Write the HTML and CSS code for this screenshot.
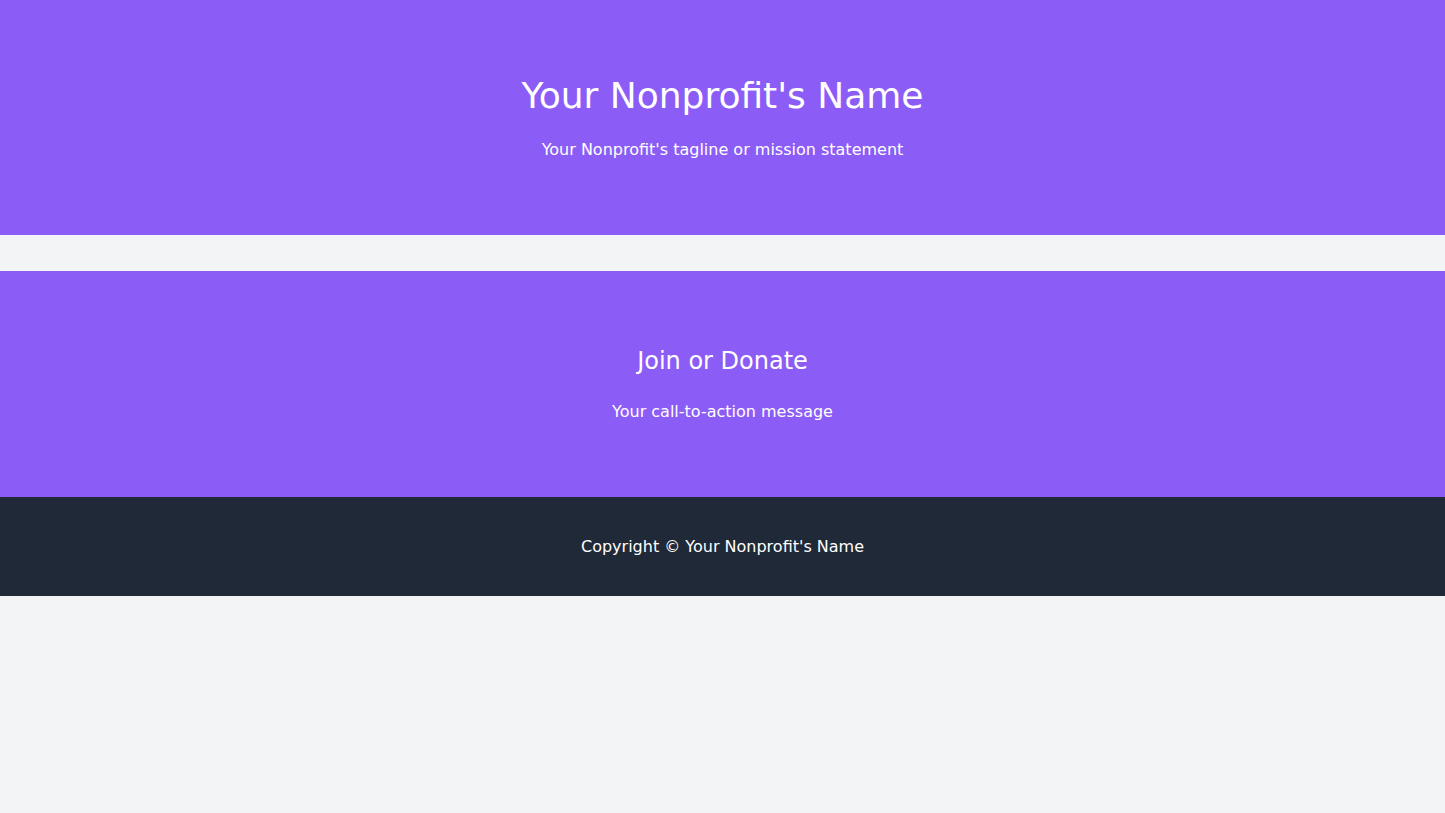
FILE: index.html
```html
<!DOCTYPE html>
<html lang="en">
<head>
<meta charset="utf-8">
<title>Your Nonprofit's Name</title>
<link rel="stylesheet" href="styles.css">
</head>
<body>
<header class="hero">
  <h1 class="hero-title">Your Nonprofit's Name</h1>
  <p class="hero-tagline">Your Nonprofit's tagline or mission statement</p>
</header>
<section class="cta">
  <h2 class="cta-title">Join or Donate</h2>
  <p class="cta-text">Your call-to-action message</p>
</section>
<footer class="footer">
  <p class="footer-text">Copyright © Your Nonprofit's Name</p>
</footer>
</body>
</html>
```
FILE: styles.css
```css
* { box-sizing: border-box; }
html, body { margin: 0; padding: 0; }
body {
  background: #f3f4f6;
  font-family: "DejaVu Sans", "Noto Sans", sans-serif;
  color: #fff;
  min-height: 813px;
}
.hero {
  background: #8b5cf6;
  height: 235px;
  padding-top: 76px;
  text-align: center;
}
.hero-title {
  margin: 0;
  font-size: 36px;
  line-height: 40px;
  font-weight: 400;
}
.hero-tagline {
  margin: 22px 0 0;
  font-size: 16px;
  line-height: 24px;
}
.cta {
  background: #8b5cf6;
  margin-top: 36px;
  height: 226px;
  padding-top: 74px;
  text-align: center;
}
.cta-title {
  margin: 0;
  font-size: 24px;
  line-height: 32px;
  font-weight: 400;
}
.cta-text {
  margin: 23px 0 0;
  font-size: 16px;
  line-height: 24px;
}
.footer {
  background: #1f2937;
  height: 99px;
  display: flex;
  align-items: center;
  justify-content: center;
}
.footer-text {
  margin: 0;
  font-size: 16px;
  line-height: 24px;
}
```
